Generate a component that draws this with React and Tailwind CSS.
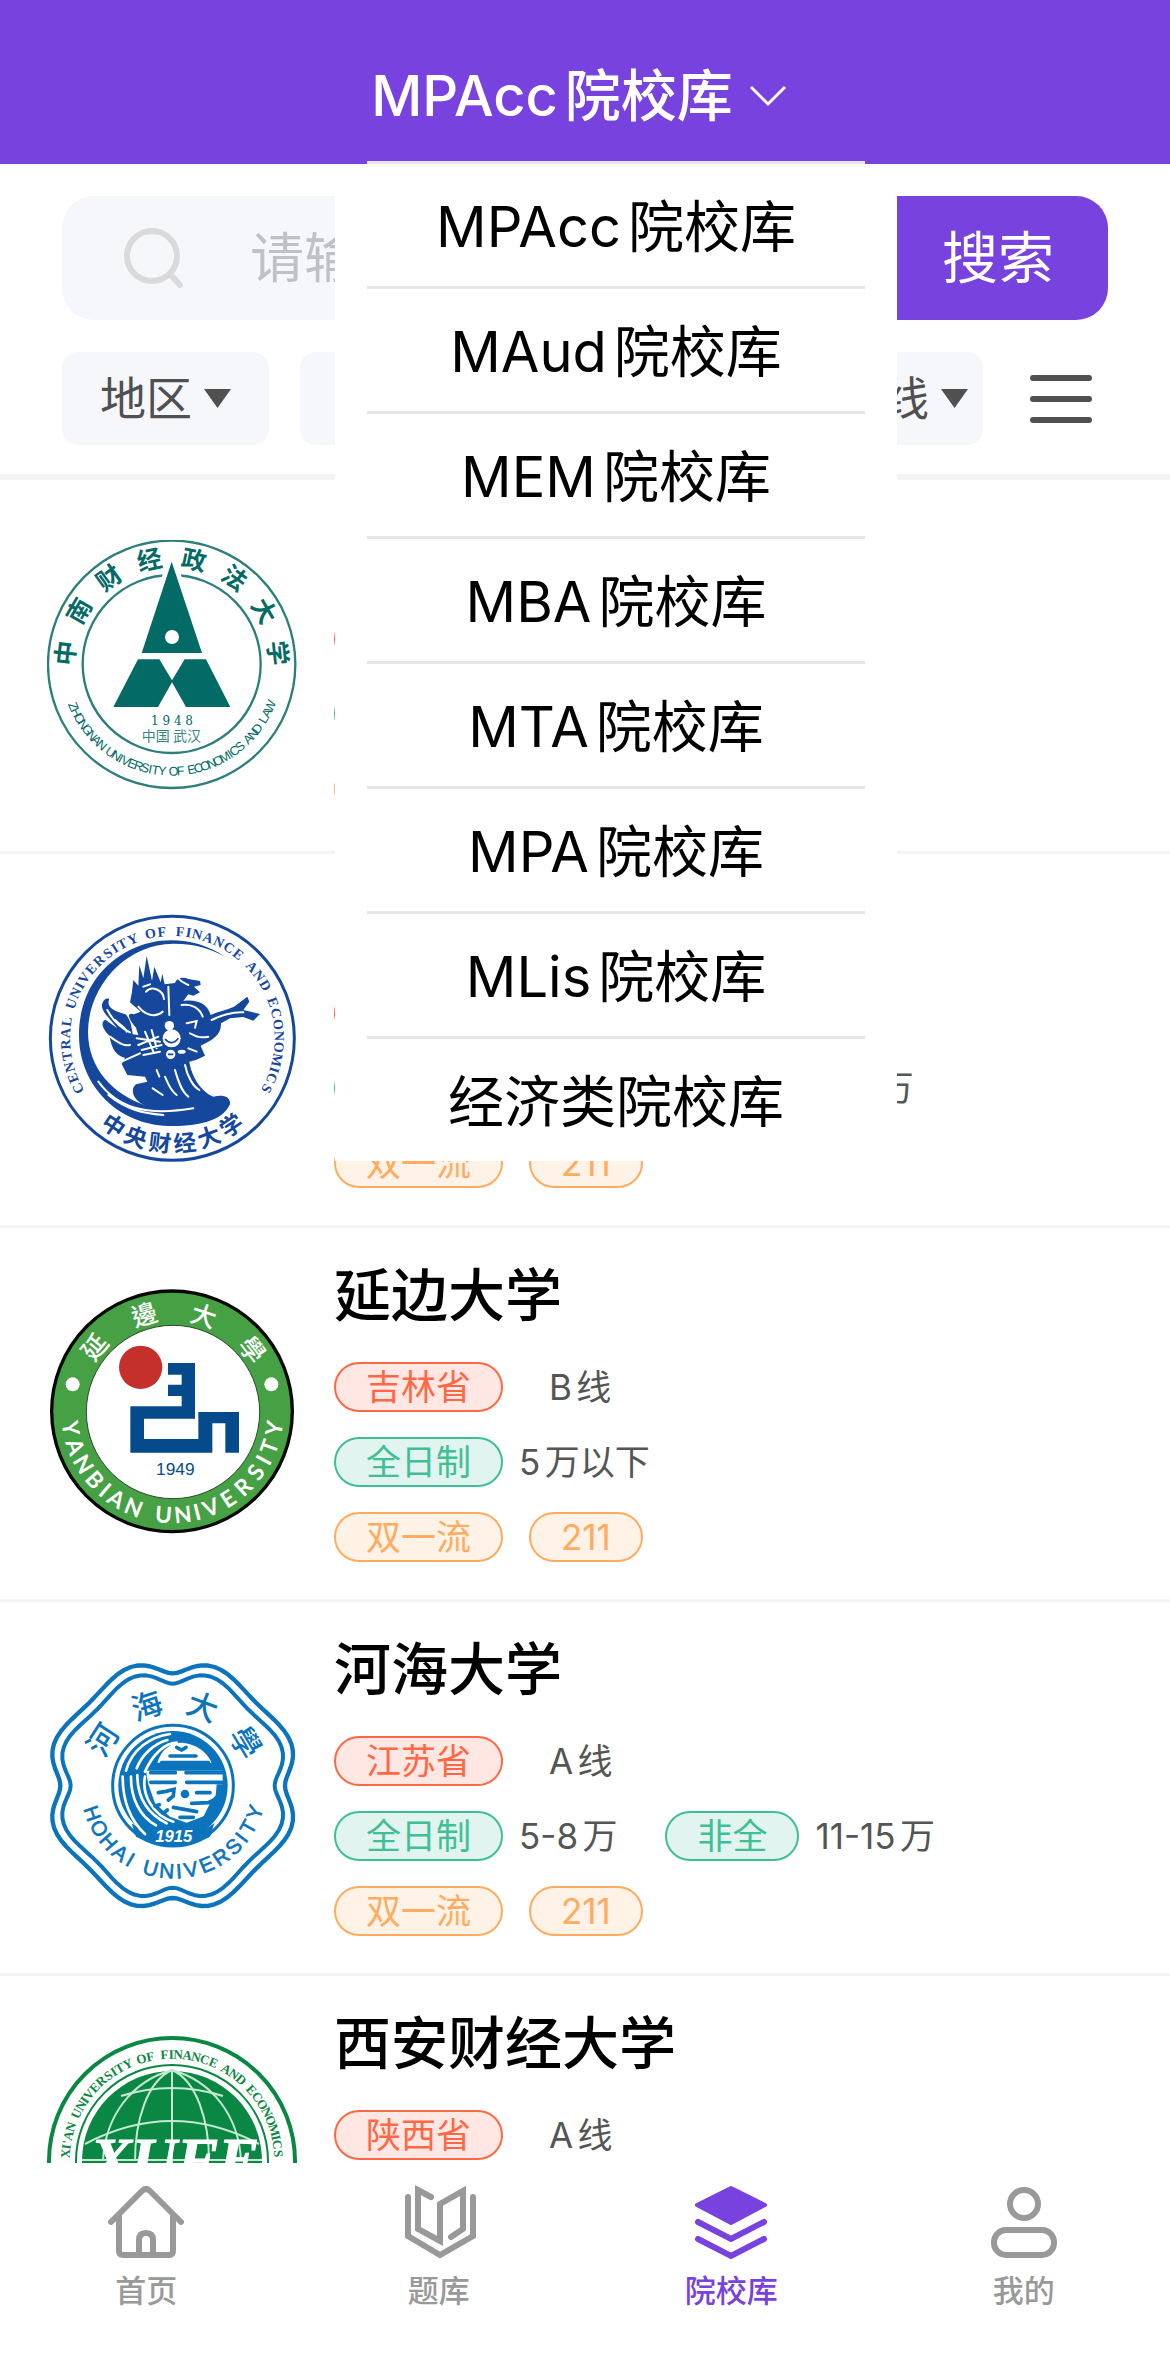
import { useState } from 'react'

const menuItems = [
  'MPAcc院校库',
  'MAud院校库',
  'MEM院校库',
  'MBA院校库',
  'MTA院校库',
  'MPA院校库',
  'MLis院校库',
  '经济类院校库',
]

const filters = ['地区', '学制', '学费', '分数线']

const schools = [
  { name: '中南财经政法大学', province: '湖北省', line: 'A线', fees: [['全日制', '5-8万']], labels: ['双一流', '211'], Logo: ZuelLogo },
  { name: '中央财经大学', province: '北京市', line: 'A线', fees: [['全日制', '5-8万'], ['非全', '5-8万']], labels: ['双一流', '211'], Logo: CufeLogo },
  { name: '延边大学', province: '吉林省', line: 'B线', fees: [['全日制', '5万以下']], labels: ['双一流', '211'], Logo: YanbianLogo },
  { name: '河海大学', province: '江苏省', line: 'A线', fees: [['全日制', '5-8万'], ['非全', '11-15万']], labels: ['双一流', '211'], Logo: HohaiLogo },
  { name: '西安财经大学', province: '陕西省', line: 'A线', fees: [['全日制', '5-8万']], labels: [], Logo: XufeLogo },
]

const tabs = [
  { name: '首页', Icon: HomeIcon },
  { name: '题库', Icon: BookIcon },
  { name: '院校库', Icon: LayersIcon, active: true },
  { name: '我的', Icon: UserIcon },
]

const charWidths = { I: 0.5, "'": 0.5, ' ': 0.6, M: 1.25, W: 1.2 }

// Places each character on a circle between two angles, measured from the top
// (or from the bottom when `bottom` is set).
function ArcText({ text, cx, cy, r, from, to, bottom, ...rest }) {
  const chars = [...text]
  const widths = chars.map((c) => charWidths[c] ?? 1)
  const centers = widths.map((w, i) => widths.slice(0, i).reduce((a, b) => a + b, 0) + w / 2)
  const first = centers[0]
  const span = centers[centers.length - 1] - first
  return (
    <g textAnchor="middle" {...rest}>
      {chars.map((c, i) => {
        const deg = from + ((centers[i] - first) / span) * (to - from)
        const rad = (deg * Math.PI) / 180
        const x = cx + r * Math.sin(rad)
        const y = bottom ? cy + r * Math.cos(rad) : cy - r * Math.cos(rad)
        return (
          <text key={i} transform={`translate(${x} ${y}) rotate(${bottom ? -deg : deg})`} dy="0.36em">{c}</text>
        )
      })}
    </g>
  )
}

function ZuelLogo() {
  return (
    <svg viewBox="51 57 750 750" className="size-full" fill="#046a66">
      <circle cx="425" cy="430" r="371" fill="none" stroke="#2c7f7b" strokeWidth="7" />
      <circle cx="425" cy="429" r="267" fill="none" stroke="#2c7f7b" strokeWidth="7" />
      <path d="M425 122 L516 396 H335 Z" stroke="#fff" strokeWidth="28" />
      <path d="M425 122 L516 396 H335 Z" />
      <circle cx="426" cy="348" r="21" fill="#fff" />
      <path d="M324 415 H388 L426 478 L464 415 H528 L601 558 H468 L426 484 L384 558 H250 Z" />
      <text x="426" y="613" textAnchor="middle" className="font-['DejaVu_Serif']" fontSize="36">1 9 4 8</text>
      <text x="424" y="659" textAnchor="middle" className="font-['Noto_Sans_CJK_SC']" fontSize="42" opacity="0.8">中国 武汉</text>
      <ArcText text="中南财经政法大学" cx={425} cy={430} r={320} from={-84} to={84} fontSize="74" fontWeight="700" className="font-['Noto_Sans_CJK_SC']" />
      <ArcText text="ZHONGNAN UNIVERSITY OF ECONOMICS AND LAW" cx={425} cy={430} r={320} from={-67} to={67} bottom fontSize="38" className="font-['Liberation_Sans_Narrow','Liberation_Sans',sans-serif]" />
    </svg>
  )
}

function CufeLogo() {
  return (
    <svg viewBox="51 57 750 750" className="size-full" fill="#15489c">
      <circle cx="427" cy="430" r="366" fill="none" stroke="#15489c" strokeWidth="9" />
      <path d="M585 185 C500 128 390 120 300 165 C200 215 147 310 147 420 C147 570 260 682 400 692 C490 697 590 680 600 620 L350 632 C250 600 174 520 174 410 C175 280 280 148 430 146 C500 146 550 165 585 185 Z" />
      <path d="M350 183 L357 215 L366 257 L373 215 L381 235 L392 262 L397 236 L404 268 L435 264 C440 248 460 245 475 252 L510 258 L512 270 L492 275 L510 292 L490 302 L475 298 L460 318 C500 312 532 325 542 360 C562 350 590 345 612 335 L652 305 L658 320 L640 345 L690 357 L670 377 L640 366 L600 370 L573 385 C575 420 545 436 512 452 L525 482 L500 494 L478 500 C484 540 510 588 550 605 C580 598 602 605 600 628 C580 670 480 690 400 668 L350 634 C310 618 298 585 318 568 L352 560 L345 545 L292 540 L275 507 L285 488 C248 480 242 440 238 422 C215 400 212 380 226 374 L262 400 C240 370 213 350 216 328 C220 312 230 308 238 312 C225 340 262 350 287 358 C302 375 305 395 308 418 L325 420 L318 398 C290 366 292 350 312 358 L332 350 L300 322 L306 290 L310 255 L325 272 L328 210 L340 250 Z" />
      <g fill="none" stroke="#fff" strokeWidth="6" strokeLinecap="round">
        <path d="M348 290 C365 270 400 285 402 312 M325 335 C345 360 375 370 398 350 M415 275 L418 360 M340 275 L360 268" />
        <path d="M445 250 C455 262 465 265 475 270 M455 330 C485 325 510 340 518 365 M470 385 L500 378 L495 398 M545 375 C570 362 610 350 640 352" />
        <path d="M232 345 C250 380 275 400 300 412 M240 425 C262 440 280 455 300 450 M255 375 C270 390 285 395 290 410" />
        <path d="M320 430 L390 440 M325 450 L385 425 M335 465 L395 450 M345 410 L370 470 M365 405 L380 460 M275 500 L330 475 M340 480 L390 470" />
        <path d="M435 525 C445 560 455 590 475 605 M465 510 C472 545 490 575 508 585 M405 545 C415 570 425 590 440 600 M368 580 L398 600 M380 525 L388 545" />
        <path d="M205 560 C260 635 340 665 490 640 M235 600 C290 645 340 655 400 660 M480 415 C500 425 510 430 535 425 M475 460 L500 470" />
      </g>
      <g fill="#fff">
        <circle cx="418" cy="392" r="14" />
        <circle cx="425" cy="430" r="27" />
        <circle cx="422" cy="478" r="14" />
        <ellipse cx="455" cy="470" rx="12" ry="6" />
      </g>
      <path d="M405 432 Q425 455 445 430 M414 478 h16" fill="none" stroke="#15489c" strokeWidth="5" />
      <ArcText text="CENTRAL UNIVERSITY OF FINANCE AND ECONOMICS" cx={427} cy={430} r={322} from={-118} to={118} fontSize="42" fontWeight="700" className="font-['Liberation_Serif']" />
      <ArcText text="中央财经大学" cx={427} cy={430} r={316} from={-34} to={34} bottom fontSize="68" fontWeight="700" className="font-['Noto_Sans_CJK_SC']" />
    </svg>
  )
}

function YanbianLogo() {
  return (
    <svg viewBox="51 54 750 750" className="size-full" fill="#fff">
      <circle cx="426" cy="424" r="361" fill="#46a044" stroke="#050805" strokeWidth="10" />
      <circle cx="429" cy="426" r="260" stroke="#2c4a2c" strokeWidth="3" />
      <circle cx="128" cy="343" r="21" />
      <circle cx="724" cy="343" r="21" />
      <circle cx="332" cy="292" r="65" fill="#c6302b" />
      <path fill="#054b8c" d="M414 279 H495 V446 H342 V507 H505 V426 H627 V548 H586 V460 H547 V548 H301 V409 H455 V378 H414 V344 H455 V314 H414 Z" />
      <text x="436" y="615" textAnchor="middle" fontSize="52" fill="#054b8c" className="font-['Liberation_Sans']">1949</text>
      <ArcText text="延邊大學" cx={427} cy={426} r={303} from={-50} to={52} fontSize="76" fontWeight="500" className="font-['Noto_Sans_CJK_TC']" />
      <ArcText text="YANBIAN UNIVERSITY" cx={427} cy={426} r={309} from={-81} to={81} bottom fontSize="68" fontWeight="700" className="font-['Lato']" />
    </svg>
  )
}

// Eight-lobed outline around (428, 437)
function lobedPath(radius) {
  const points = []
  for (let d = 0; d < 360; d += 3) {
    const phi = (d * Math.PI) / 180
    const angle = phi - 0.08 * Math.sin(4 * phi)
    const r = radius - 16 * Math.cos(8 * phi) - 8 * Math.cos(4 * phi)
    points.push(`${(428 + r * Math.sin(angle)).toFixed(1)} ${(437 - r * Math.cos(angle)).toFixed(1)}`)
  }
  return `M${points.join(' L')} Z`
}

function HohaiLogo() {
  return (
    <svg viewBox="51 66 750 750" className="size-full" fill="#0b74bd">
      <path d={lobedPath(361)} fill="none" stroke="#0b74bd" strokeWidth="13" strokeLinejoin="round" />
      <path d={lobedPath(330)} fill="none" stroke="#0b74bd" strokeWidth="12" strokeLinejoin="round" />
      <circle cx="429" cy="437" r="181" fill="none" stroke="#0b74bd" strokeWidth="9" />
      <circle cx="429" cy="437" r="164" />
      <path d="M305 550 Q429 640 553 550 L540 590 Q429 650 318 590 Z" />
      <g fill="none" stroke="#fff" strokeWidth="8" strokeLinecap="round">
        <path d="M420 282 C360 290 305 330 288 392 M412 300 C370 312 335 345 320 385" />
        <path d="M278 410 C278 480 300 540 345 582 M303 410 C302 475 330 530 378 556 M322 405 C322 470 350 520 410 550" />
        <path d="M345 395 C370 340 405 310 440 308 M345 410 C335 460 365 525 430 545" />
      </g>
      <path fill="#fff" d="M382 368 C395 325 425 308 456 308 C500 312 530 335 545 368 Z" />
      <path fill="#fff" d="M348 392 H578 V433 H560 L555 490 L530 525 L470 548 L420 530 L375 490 L355 433 Z" />
      <g fill="none" stroke="#0b74bd" strokeWidth="11" strokeLinecap="round">
        <path d="M420 348 H498 M440 322 L455 330 L468 322 M395 368 H535" />
        <path d="M362 398 H436 M468 398 H576 M362 427 H436 M470 427 H576" />
        <path d="M385 458 L408 454 L432 448 L430 468 L415 480 M500 458 H540 M485 490 L535 488 L555 478 M375 498 L388 494 M400 520 L412 510 M430 502 L500 515 M450 532 H490" />
      </g>
      <circle cx="465" cy="462" r="13" />
      <path d="M545 480 L580 440 L575 500 L545 545 L490 565 L520 530 Z" />
      <text x="431" y="605" textAnchor="middle" fontSize="50" fontWeight="700" fontStyle="italic" fill="#fff" className="font-['Liberation_Sans']">1915</text>
      <ArcText text="河海大學" cx={430} cy={437} r={252} from={-57} to={59} fontSize="92" fontWeight="500" className="font-['Noto_Sans_CJK_TC']" />
      <ArcText text="HOHAI UNIVERSITY" cx={430} cy={437} r={256} from={-71} to={72} bottom fontSize="62" stroke="#0b74bd" strokeWidth="2" className="font-['Liberation_Sans']" />
    </svg>
  )
}

function XufeLogo() {
  return (
    <svg viewBox="0 0 250 250" className="size-full" fill="#0a8843">
      <circle cx="125" cy="125" r="123" fill="none" stroke="#0a8843" strokeWidth="4" />
      <circle cx="125" cy="125" r="96" fill="none" stroke="#0a8843" strokeWidth="2" />
      <circle cx="125" cy="125" r="90" />
      <g fill="none" stroke="#c5e8d3" strokeWidth="2">
        <path d="M125 34 V216 M125 34 C100 45 88 85 88 125 M125 34 C150 45 162 85 162 125 M125 34 C85 45 58 80 56 125 M125 34 C165 45 192 80 194 125" />
        <path d="M74 60 Q125 44 176 60 M38 108 Q125 62 212 108 M35 124 H215" />
      </g>
      <text x="128" y="144" textAnchor="middle" fontSize="62" fontWeight="700" fontStyle="italic" fill="#fff" stroke="#fff" className="font-['Liberation_Serif']">XUFE</text>
      <ArcText text="XI'AN UNIVERSITY OF FINANCE AND ECONOMICS" cx={125} cy={125} r={107} from={-86} to={86} fontSize="13" fontWeight="700" className="font-['Liberation_Serif']" />
    </svg>
  )
}

function TabIcon({ children }) {
  return (
    <svg viewBox="0 0 80 80" className="size-20" fill="none" stroke="currentColor" strokeWidth="6" strokeLinecap="round" aria-hidden="true">
      {children}
    </svg>
  )
}

function HomeIcon() {
  return (
    <TabIcon>
      <path d="M5 39 L36 8 Q40 4 44 8 L75 39" />
      <path d="M13 34 V68 Q13 72 17 72 H63 Q67 72 67 68 V34 M33 72 V57 Q33 50 40 50 Q47 50 47 57 V72" />
    </TabIcon>
  )
}

function BookIcon() {
  return (
    <TabIcon>
      <path d="M9 14 V53 L41 72 L74 53 V14" />
      <path d="M32 14 L19 7 V46 L41 58 V21 L64 8 V46 L52 54" />
    </TabIcon>
  )
}

function LayersIcon() {
  return (
    <TabIcon>
      <path d="M40 5 L74 22 L40 40 L6 22 Z" fill="currentColor" strokeWidth="4" strokeLinejoin="round" />
      <path d="M7 39 L40 56 L73 39 M7 56 L40 73 L73 56" />
    </TabIcon>
  )
}

function UserIcon() {
  return (
    <TabIcon>
      <circle cx="40" cy="21" r="14" />
      <rect x="10" y="47" width="60" height="25" rx="12" />
    </TabIcon>
  )
}

const tagColors = {
  red: 'border-[#ff6845] bg-[#ffe7e3] text-[#ff6845]',
  green: 'border-[#3fbf95] bg-[#e2f4ef] text-[#3fbf95]',
  orange: 'border-[#ffab60] bg-[#fff2e6] text-[#ffab60]',
}

function Tag({ color, children }) {
  return (
    <span className={`flex h-[50px] items-center rounded-full border-2 px-[30px] leading-none ${tagColors[color]}`}>
      {children}
    </span>
  )
}

function SchoolRow({ school }) {
  const { name, province, line, fees, labels, Logo } = school
  return (
    <li className="flex gap-[37px] border-b-[3px] border-[#f4f4f4] pl-[47px]">
      <div className="mt-[60px] mb-[61px] size-[250px] shrink-0">
        <Logo />
      </div>
      <div className="min-w-0 pt-7 text-[35px] text-[#555]">
        <h2 className="text-[57px] leading-[80px] font-medium text-black">{name}</h2>
        <div className="mt-[26px] flex items-center gap-[46px] leading-none">
          <Tag color="red">{province}</Tag>
          <span>{line}</span>
        </div>
        <div className="mt-[25px] flex items-center gap-12 leading-none">
          {fees.map(([mode, fee]) => (
            <div key={mode} className="flex items-center gap-4">
              <Tag color="green">{mode}</Tag>
              <span>{fee}</span>
            </div>
          ))}
        </div>
        <div className="mt-[25px] flex gap-[26px]">
          {labels.map((label) => <Tag key={label} color="orange">{label}</Tag>)}
        </div>
      </div>
    </li>
  )
}

export default function App() {
  const [open, setOpen] = useState(true)
  const [current, setCurrent] = useState(menuItems[0])

  const handleSelect = (item) => {
    setCurrent(item)
    setOpen(false)
  }

  return (
    <div className="flex h-screen flex-col overflow-hidden bg-white font-['Inter','Noto_Sans_CJK_SC',sans-serif] [text-autospace:normal]">
      <header className="relative z-10 flex justify-center bg-[#7842df] pt-14 pr-3 pb-7">
        <button type="button" onClick={() => setOpen(!open)} aria-expanded={open} className="flex items-center gap-4 text-[56px] leading-[80px] font-medium text-white">
          {current}
          <svg viewBox="0 0 38 22" className="w-[38px]" fill="none" stroke="currentColor" strokeWidth="3" aria-hidden="true">
            <path d="M2 2 L19 19 L36 2" />
          </svg>
        </button>
        {open && (
          <ul className="absolute top-full left-1/2 w-[562px] -translate-x-[250px] bg-white px-8">
            {menuItems.map((item) => (
              <li key={item} className="h-[125px] border-t-[3px] border-[#e6e6e6] first:-mt-[3px]">
                <button type="button" onClick={() => handleSelect(item)} className="size-full pt-1 text-center text-[56px] text-black">{item}</button>
              </li>
            ))}
          </ul>
        )}
      </header>

      <div className="border-b-[6px] border-[#f4f4f4] px-[62px] pt-8 pb-[29px]">
        <form className="flex h-[124px] overflow-hidden rounded-[32px] bg-[#f6f7fb]" onSubmit={(e) => e.preventDefault()}>
          <label htmlFor="keyword" className="flex items-center pr-16 pl-[62px]" aria-label="搜索院校">
            <svg viewBox="0 0 62 66" className="w-[62px]" fill="none" stroke="#dadada" strokeWidth="6" strokeLinecap="round" aria-hidden="true">
              <circle cx="28" cy="31" r="25" />
              <path d="M46 49 L56 60" />
            </svg>
          </label>
          <input id="keyword" type="text" placeholder="请输入院校名称" className="min-w-0 flex-1 bg-transparent text-[54px] outline-none placeholder:text-[#c0c1c4]" />
          <button type="submit" className="w-[220px] bg-[#7842df] text-[56px] text-white">搜索</button>
        </form>
        <div className="mt-8 flex items-center gap-[31px]">
          {filters.map((name) => (
            <button key={name} type="button" className="flex h-[93px] flex-1 items-center justify-center gap-3 rounded-2xl bg-[#f6f7fb] text-[46px] whitespace-nowrap text-[#505050]">
              {name}
              <svg viewBox="0 0 27 20" className="w-[27px]" fill="currentColor" aria-hidden="true">
                <path d="M0 0 H27 L13.5 19 Z" />
              </svg>
            </button>
          ))}
          <button type="button" aria-label="更多筛选" className="mr-4 ml-4 text-[#505050]">
            <svg viewBox="0 0 62 50" className="w-[62px]" fill="none" stroke="currentColor" strokeWidth="6" strokeLinecap="round">
              <path d="M3 4 H59 M3 25 H59 M3 46 H59" />
            </svg>
          </button>
        </div>
      </div>

      <ul className="min-h-0 flex-1 overflow-hidden">
        {schools.map((school) => <SchoolRow key={school.name} school={school} />)}
      </ul>

      <nav className="grid grid-cols-4 bg-white pt-5 pb-[69px]">
        {tabs.map(({ name, Icon, active }) => (
          <a key={name} href="#" className={`flex flex-col items-center gap-2 text-[31px] leading-[40px] font-medium ${active ? 'text-[#7842df]' : 'text-[#999]'}`}>
            <Icon />
            {name}
          </a>
        ))}
      </nav>
    </div>
  )
}
